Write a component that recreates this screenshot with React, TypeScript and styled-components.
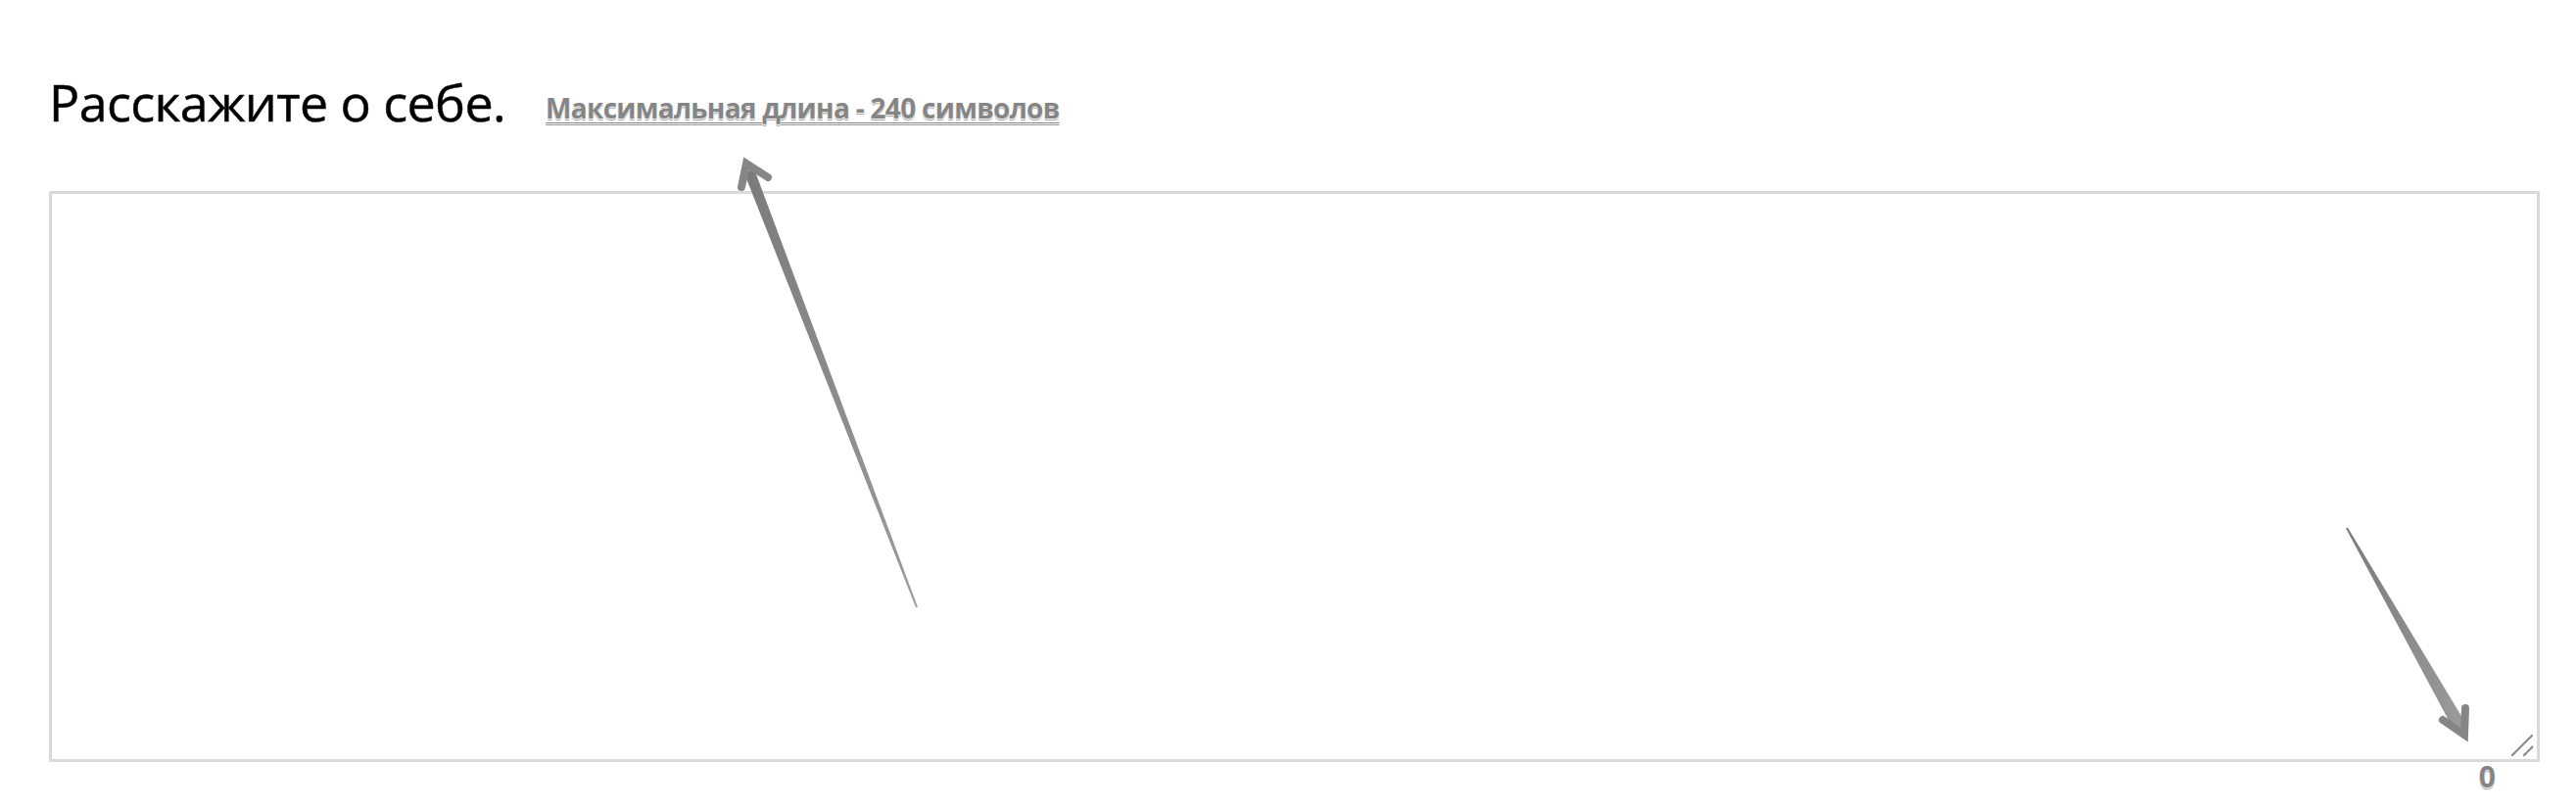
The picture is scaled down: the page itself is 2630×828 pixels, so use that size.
import React from "react";
import styled, { createGlobalStyle } from "styled-components";

const GlobalStyle = createGlobalStyle`
  html, body { margin: 0; padding: 0; background: #fff; }
  body { font-family: "Open Sans", "Noto Sans", sans-serif; }
`;

const Page = styled.div`
  position: relative;
  width: 2630px;
  height: 828px;
  box-sizing: border-box;
  padding: 73px 37px 0 50px;
  overflow: hidden;
`;

const TitleRow = styled.div`
  display: flex;
  align-items: baseline;
  gap: 41px;
  height: 62px;
  margin-bottom: 60px;
`;

const Title = styled.h2`
  margin: 0;
  font-family: "Open Sans", sans-serif;
  font-weight: 400;
  font-size: 52px;
  line-height: 62px;
  color: #000;
  letter-spacing: -0.6px;
  -webkit-text-stroke: 0.5px #111;
`;

const Hint = styled.a`
  font-family: "Open Sans", sans-serif;
  font-weight: 700;
  font-size: 28px;
  letter-spacing: -0.7px;
  color: #858585;
  text-decoration: underline;
  text-decoration-thickness: 1px;
  text-underline-offset: 4px;
  text-shadow: 0 0 1px #fff, 0 1px 1px #fff, 0 2px 1px rgba(0, 0, 0, 0.4);
  position: relative;
  top: -3px;
`;

const Field = styled.div`
  position: relative;
`;

const TextArea = styled.textarea`
  display: block;
  width: 100%;
  height: 583px;
  box-sizing: border-box;
  border: 3px solid #d9d9d9;
  border-radius: 1px;
  outline: none;
  resize: none;
  padding: 8px;
  font-family: "Open Sans", sans-serif;
  font-size: 20px;
  background: #fff;
`;

const Grip = styled.svg`
  position: absolute;
  right: 5px;
  bottom: 4px;
  width: 26px;
  height: 26px;
  pointer-events: none;
`;

const Counter = styled.div`
  margin-top: 0;
  padding-right: 45px;
  text-align: right;
  font-family: "Open Sans", sans-serif;
  font-weight: 700;
  font-size: 30px;
  line-height: 30px;
  color: #858585;
  text-shadow: 0 0 1px #fff, 0 1px 1px #fff, 0 2px 1px rgba(0, 0, 0, 0.4);
`;

const Overlay = styled.svg`
  position: absolute;
  left: 0;
  top: 0;
  width: 2630px;
  height: 828px;
  pointer-events: none;
`;

type Pt = [number, number];

function shaft(t: Pt, p: Pt, wt: number, wh: number): string {
  const dx = p[0] - t[0];
  const dy = p[1] - t[1];
  const len = Math.hypot(dx, dy);
  const ux = dx / len;
  const uy = dy / len;
  const nx = -uy;
  const ny = ux;
  const e: Pt = [p[0] - ux * 8, p[1] - uy * 8];
  const pts: Pt[] = [
    [t[0] + (nx * wt) / 2, t[1] + (ny * wt) / 2],
    [e[0] + (nx * wh) / 2, e[1] + (ny * wh) / 2],
    [e[0] - (nx * wh) / 2, e[1] - (ny * wh) / 2],
    [t[0] - (nx * wt) / 2, t[1] - (ny * wt) / 2],
  ];
  return pts.map((q) => q.join(",")).join(" ");
}

function Arrow({
  tail,
  tip,
  w1,
  w2,
  wing,
  head,
}: {
  tail: Pt;
  tip: Pt;
  w1: Pt;
  w2: Pt;
  wing: number;
  head: number;
}) {
  return (
    <g>
      <polygon points={shaft(tail, tip, 2, head)} fill="url(#ag)" />
      <polyline
        points={`${w1.join(",")} ${tip.join(",")} ${w2.join(",")}`}
        fill="none"
        stroke="#868686"
        strokeWidth={wing}
        strokeLinecap="round"
        strokeLinejoin="miter"
      />
    </g>
  );
}

export default function App() {
  return (
    <>
      <GlobalStyle />
      <Page>
        <TitleRow>
          <Title>Расскажите о себе.</Title>
          <Hint>Максимальная длина - 240 символов</Hint>
        </TitleRow>
        <Field>
          <TextArea />
          <Grip viewBox="0 0 26 26">
            <line x1="3" y1="23" x2="23" y2="3" stroke="#8c8c8c" strokeWidth="2.2" strokeDasharray="3 1.5" strokeLinecap="round" />
            <line x1="15" y1="23" x2="24" y2="14" stroke="#8c8c8c" strokeWidth="2.2" strokeDasharray="3 1.5" strokeLinecap="round" />
          </Grip>
        </Field>
        <Counter>0</Counter>
        <Overlay viewBox="0 0 2630 828">
          <defs>
            <linearGradient id="ag" x1="0" y1="0" x2="1" y2="0">
              <stop offset="0" stopColor="#7a7a7a" />
              <stop offset="1" stopColor="#9c9c9c" />
            </linearGradient>
          </defs>
          <Arrow tail={[936, 620]} tip={[762, 167]} w1={[757, 191]} w2={[784, 181]} wing={8} head={11} />
          <Arrow tail={[2396, 539]} tip={[2516, 750]} w1={[2494, 735]} w2={[2517, 723]} wing={8} head={14} />
        </Overlay>
      </Page>
    </>
  );
}
